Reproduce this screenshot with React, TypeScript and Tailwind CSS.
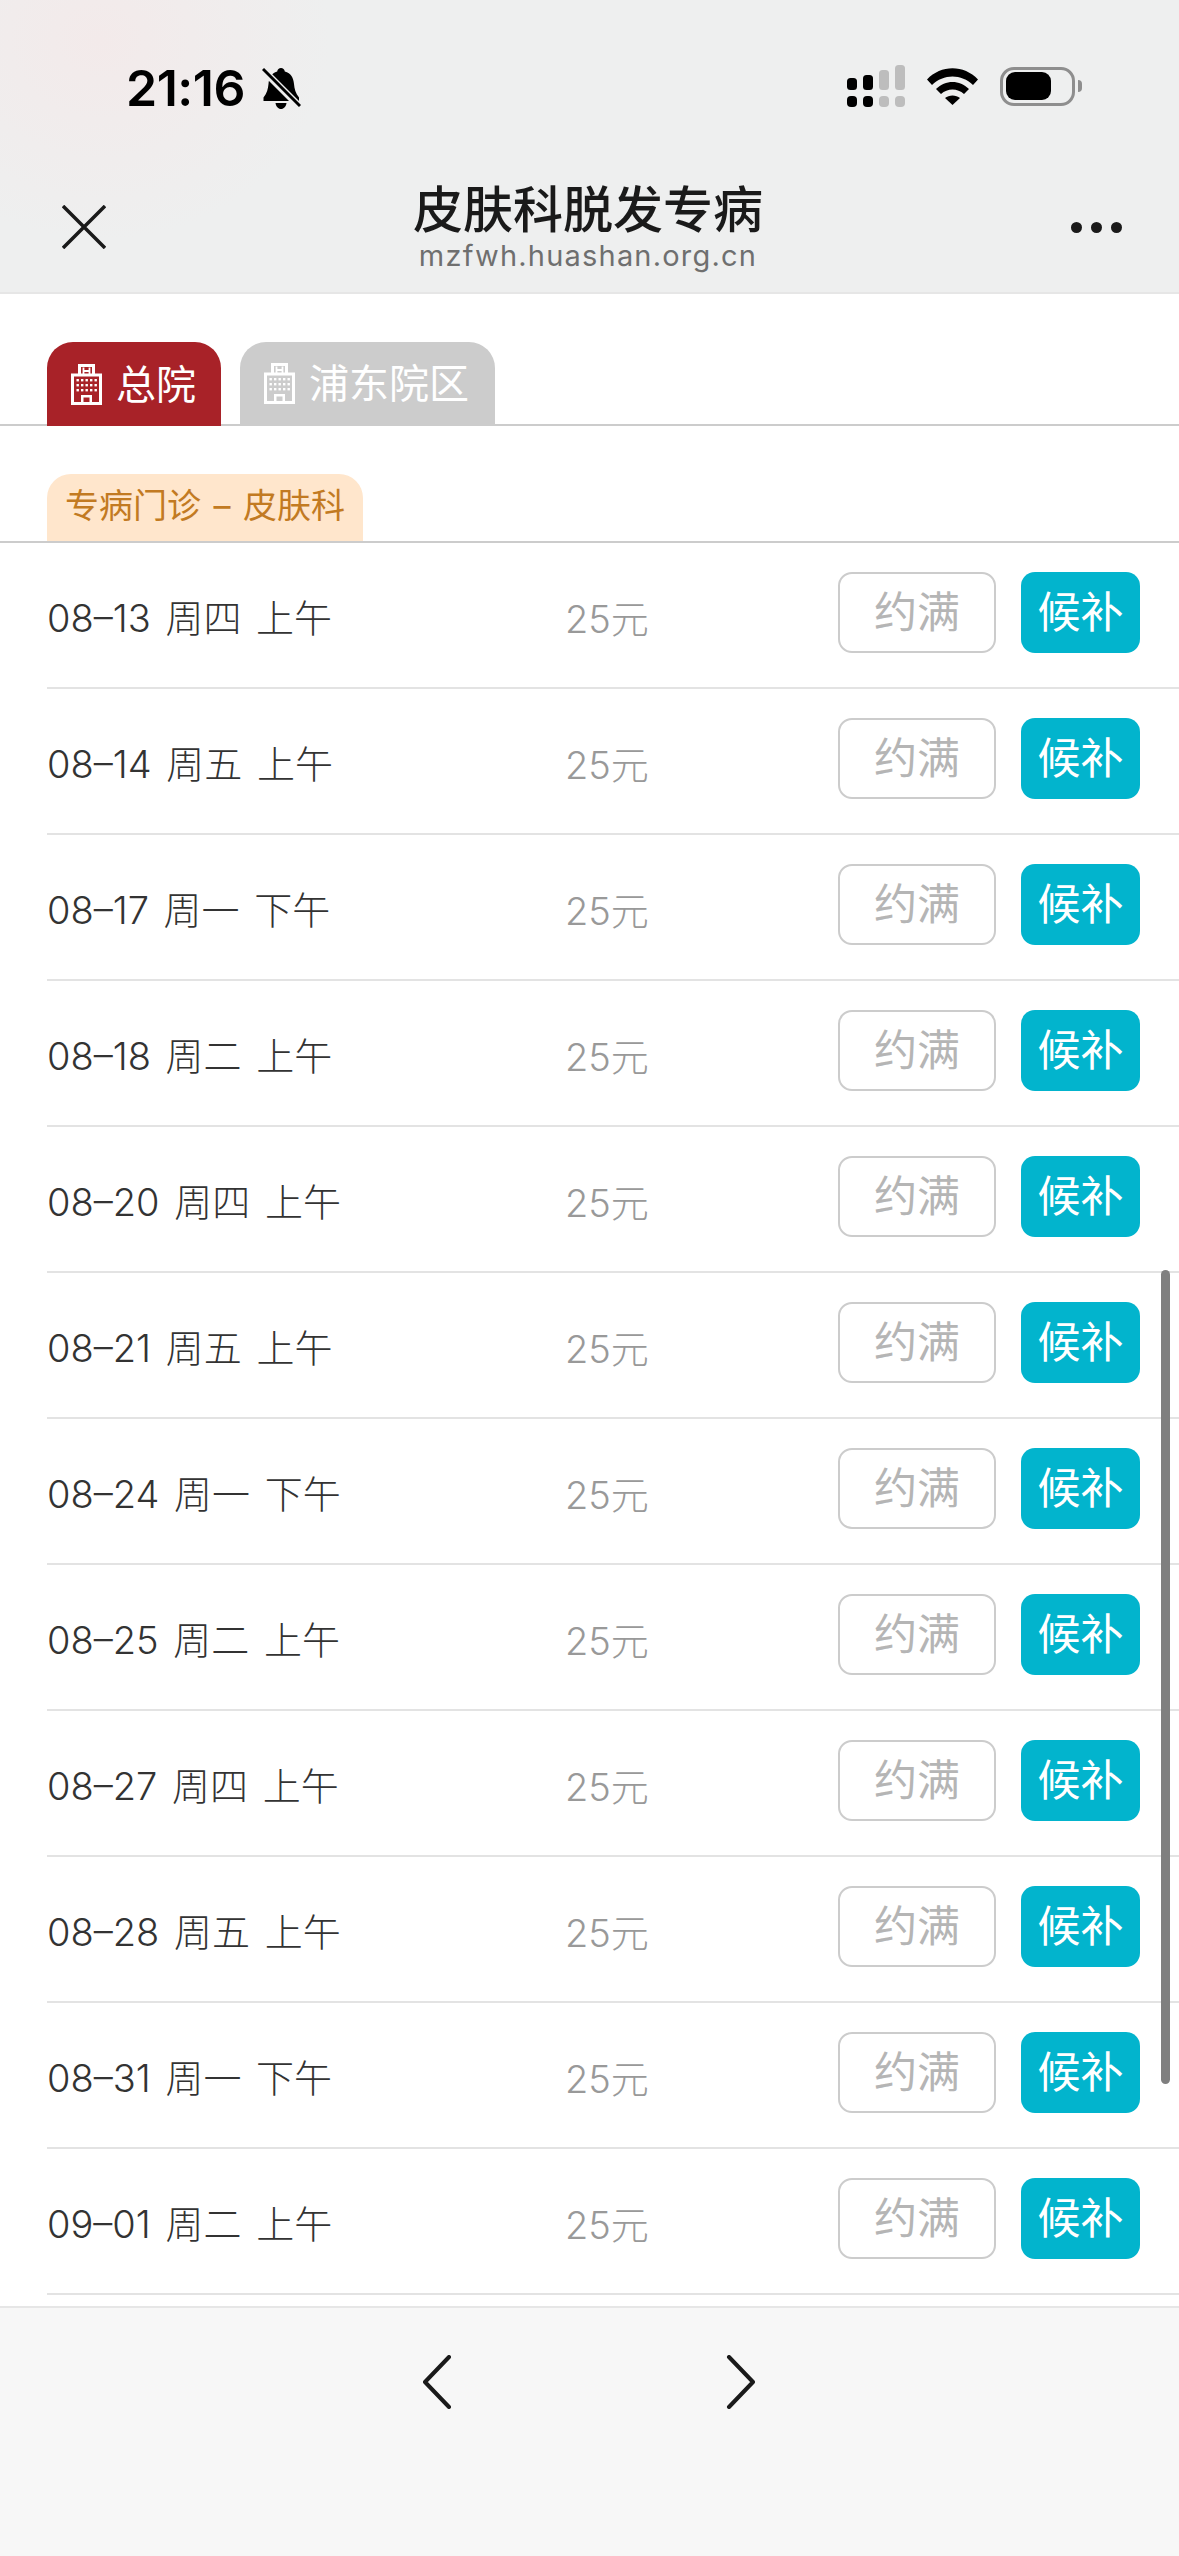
import React from "react";

const rows = [
  { date: "08–13", week: "周四", time: "上午" },
  { date: "08–14", week: "周五", time: "上午" },
  { date: "08–17", week: "周一", time: "下午" },
  { date: "08–18", week: "周二", time: "上午" },
  { date: "08–20", week: "周四", time: "上午" },
  { date: "08–21", week: "周五", time: "上午" },
  { date: "08–24", week: "周一", time: "下午" },
  { date: "08–25", week: "周二", time: "上午" },
  { date: "08–27", week: "周四", time: "上午" },
  { date: "08–28", week: "周五", time: "上午" },
  { date: "08–31", week: "周一", time: "下午" },
  { date: "09–01", week: "周二", time: "上午" },
];

function SignalIcon() {
  const cols = [
    { h: 12, on: true },
    { h: 15, on: true },
    { h: 20, on: false },
    { h: 25, on: false },
  ];
  return (
    <svg width="60" height="42" viewBox="0 0 60 42" className="block">
      {cols.map((c, i) => (
        <g key={i} fill={c.on ? "#000" : "#bdbdbd"}>
          <rect x={i * 16} y={25 - c.h} width="10" height={c.h} rx="3.5" />
          <rect x={i * 16} y={31} width="10" height="11" rx="4" />
        </g>
      ))}
    </svg>
  );
}

function WifiIcon() {
  return (
    <svg width="51" height="37" viewBox="0 0 51 37" className="block">
      <path d="M0 11.500C14-3.500 37-3.500 51 11.500L46 17C34.500 5.500 16.500 5.500 5 17Z" fill="#000" />
      <path d="M9 21C18.500 11.500 32.500 11.500 42 21L37 26C30.500 20 20.500 20 14 26Z" fill="#000" />
      <path d="M18 30C22 26.500 29 26.500 33 30L25.500 37Z" fill="#000" />
    </svg>
  );
}

function BatteryIcon() {
  return (
    <div className="flex items-center">
      <div className="w-[75px] h-[39px] rounded-[14px] border-[3px] border-[#8e8e8e] p-[2.500px] box-border">
        <div className="w-[45px] h-full rounded-[9px] bg-black" />
      </div>
      <div className="ml-[3px] w-[4px] h-[12px] rounded-r-full bg-[#8e8e8e]" />
    </div>
  );
}

function BellOffIcon() {
  return (
    <svg width="39" height="42" viewBox="0 0 39 42" className="block">
      <path d="M19 1c2 0 3.500 1.500 3.800 3.500C29 6 31.500 11 32 17c.4 5 1.500 9 5 13.500V34H1.500v-3.500C5 26 6 22 6.500 17 7 11 9.500 6 15.200 4.500 15.500 2.500 17 1 19 1Z" fill="#000" />
      <path d="M13.500 36h11c-.5 3.500-2.700 6-5.500 6s-5-2.500-5.500-6Z" fill="#000" />
      <path d="M1 3 37 39" stroke="#eee" strokeWidth="7" />
      <path d="M1 2 38 39" stroke="#000" strokeWidth="3" />
    </svg>
  );
}

function HospitalIcon({ color }: { color: string }) {
  return (
    <svg width="31" height="41" viewBox="0 0 31 41" className="block shrink-0">
      {/* tower */}
      <path d="M8.500 10V1.500h14V10" fill="none" stroke="#fff" strokeWidth="3" />
      <path d="M12.500 3.500v7M18.500 3.500v7M12.500 7h6" stroke="#fff" strokeWidth="1.800" fill="none" />
      {/* body */}
      <rect x="1.500" y="11" width="28" height="28.500" fill="none" stroke="#fff" strokeWidth="3" />
      {[15, 20, 25].map((y) =>
        [5.500, 10, 14.500, 19, 23.500].map((x) => (
          <rect key={`${x}-${y}`} x={x} y={y} width="2.400" height="2.400" fill="#fff" />
        ))
      )}
      {/* door */}
      <rect x="10" y="31" width="11" height="10" fill="#fff" />
      <rect x="12.500" y="33.500" width="6" height="4.500" fill={color} />
    </svg>
  );
}

function Row({ date, week, time }: { date: string; week: string; time: string }) {
  return (
    <div className="ml-[47px] h-[146px] border-b-2 border-[#e3e3e3] flex items-start box-border">
      <div className="w-[519px] pt-[52px] text-[38px] leading-[46px] text-[#333] font-light whitespace-pre [word-spacing:4px]">
        {date} {week} {time}
      </div>
      <div className="w-[272px] pt-[53px] text-[38px] leading-[46px] text-[#999] font-light -ml-[1px] mr-[1px]">25元</div>
      <div className="mt-[29px] w-[158px] h-[81px] rounded-[14px] border-2 border-[#cccccc] flex items-center justify-center text-[43px] text-[#b5b5b5] box-border">
        约满
      </div>
      <div className="mt-[29px] ml-[25px] w-[119px] h-[81px] rounded-[14px] bg-[#02b4cd] flex items-center justify-center text-[43px] text-white box-border">
        候补
      </div>
    </div>
  );
}

export default function App() {
  return (
    <div className="relative w-[1179px] h-[2556px] overflow-hidden bg-white flex flex-col font-['Inter','Noto_Sans_CJK_SC',sans-serif]">
      {/* header */}
      <header className="h-[294px] shrink-0 border-b-2 border-[#e6e6e6] box-border bg-[#eeefef] bg-[radial-gradient(ellipse_230px_200px_at_100px_40px,#f3eaea,#eeefef)]">
        <div className="h-[172px] pt-[64px] pl-[126px] pr-[97px] flex items-start justify-between box-border">
          <div className="flex items-start">
            <span className="text-[50px] leading-[48px] font-semibold text-black tracking-[-0.5px]">21:16</span>
            <span className="ml-[17px] mt-[3px]"><BellOffIcon /></span>
          </div>
          <div className="flex items-center mt-[1px]">
            <SignalIcon />
            <span className="ml-[20px]"><WifiIcon /></span>
            <span className="ml-[22px]"><BatteryIcon /></span>
          </div>
        </div>
        <div className="relative flex items-start justify-between pl-[62px] pr-[57px]">
          <svg width="44" height="44" viewBox="0 0 44 44" className="mt-[33px]">
            <path d="M1 1 43 43M43 1 1 43" stroke="#1a1a1a" strokeWidth="3.500" fill="none" />
          </svg>
          <div className="absolute left-0 right-0 top-[8px] flex flex-col items-center pr-[3px]">
            <div className="text-[50px] leading-[60px] text-[#1a1a1a] font-medium">皮肤科脱发专病</div>
            <div className="text-[29px] leading-[30px] text-[#6f6f6f] tracking-[1.200px] mt-[1px]">mzfwh.huashan.org.cn</div>
          </div>
          <div className="mt-[50px] flex gap-[9px]">
            <span className="w-[11px] h-[11px] rounded-full bg-[#1a1a1a]" />
            <span className="w-[11px] h-[11px] rounded-full bg-[#1a1a1a]" />
            <span className="w-[11px] h-[11px] rounded-full bg-[#1a1a1a]" />
          </div>
        </div>
      </header>

      {/* hospital tabs */}
      <div className="mt-[48px] h-[84px] shrink-0 border-b-2 border-[#cccccc] pl-[47px] flex items-start gap-[19px] box-border">
        <div className="h-[84px] w-[174px] rounded-t-[26px] bg-[#a82228] flex items-center pl-[24px] text-[40px] text-white">
          <HospitalIcon color="#a82228" />
          <span className="ml-[14px] mt-[1px]">总院</span>
        </div>
        <div className="h-[82px] w-[255px] rounded-t-[26px] bg-[#cccccc] flex items-center pl-[24px] text-[40px] text-white">
          <HospitalIcon color="#cccccc" />
          <span className="ml-[14px] mt-[1px]">浦东院区</span>
        </div>
      </div>

      {/* department tag */}
      <div className="mt-[48px] h-[69px] shrink-0 border-b-2 border-[#cccccc] pl-[47px] box-border">
        <div className="h-[67px] w-[316px] rounded-t-[24px] bg-[#ffe6cc] text-[#c27a22] text-[34px] leading-[64px] text-center whitespace-pre [word-spacing:3px]">
          专病门诊 – 皮肤科
        </div>
      </div>

      {/* schedule rows */}
      <div className="flex-1 overflow-hidden">
        {rows.map((r) => (
          <Row key={r.date} date={r.date} week={r.week} time={r.time} />
        ))}
      </div>

      {/* footer */}
      <footer className="h-[250px] shrink-0 border-t-2 border-[#e6e6e6] bg-[#f7f7f7] box-border pt-[47px] pl-[422px] flex items-start gap-[274px]">
        <svg width="30" height="54" viewBox="0 0 30 54">
          <path d="M27 2 3 27l24 25" fill="none" stroke="#1a1a1a" strokeWidth="4" strokeLinecap="round" strokeLinejoin="round" />
        </svg>
        <svg width="30" height="54" viewBox="0 0 30 54">
          <path d="M3 2l24 25L3 52" fill="none" stroke="#1a1a1a" strokeWidth="4" strokeLinecap="round" strokeLinejoin="round" />
        </svg>
      </footer>

      {/* scrollbar */}
      <div className="absolute left-[1161px] top-[1270px] w-[9px] h-[814px] rounded-full bg-[#7f7f7f]" />
    </div>
  );
}
